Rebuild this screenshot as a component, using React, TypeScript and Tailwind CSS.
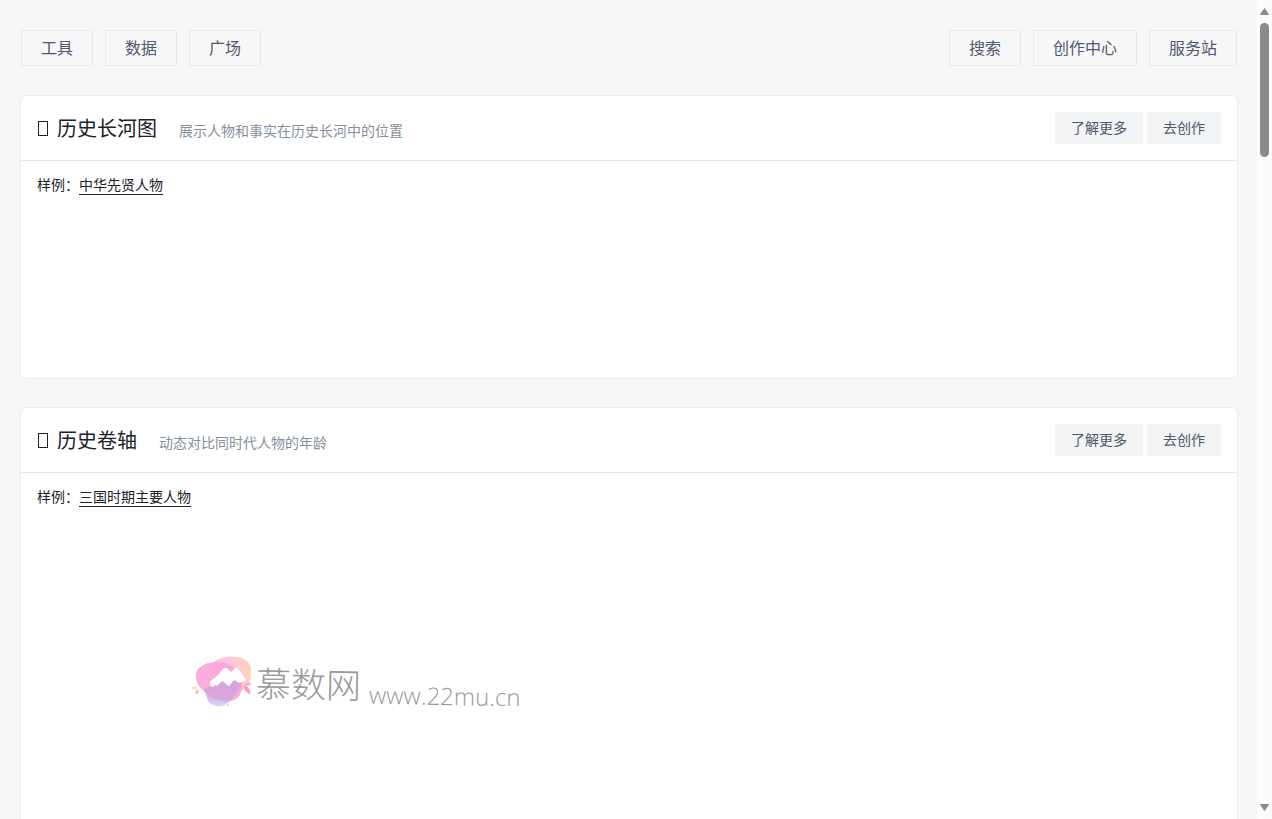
interface Tool {
  name: string;
  intro: string;
  example: string;
}

const leftLinks = ['工具', '数据', '广场'];
const rightLinks = ['搜索', '创作中心', '服务站'];

const riverTool: Tool = { name: '历史长河图', intro: '展示人物和事实在历史长河中的位置', example: '中华先贤人物' };
const scrollTool: Tool = { name: '历史卷轴', intro: '动态对比同时代人物的年龄', example: '三国时期主要人物' };

function NavLinks({ items }: { items: string[] }) {
  return (
    <div className="flex gap-3">
      {items.map((item) => (
        <a
          key={item}
          href="#"
          className="flex h-9 items-center border border-[#e9e9eb] px-[19px] pb-[3px] text-base leading-6 text-[#4e5969]"
        >
          {item}
        </a>
      ))}
    </div>
  );
}

function ToolHeader({ tool }: { tool: Tool }) {
  return (
    <header className="flex items-center justify-between border-b border-[#e5e6e8] px-4 py-4">
      <div className="flex items-baseline">
        <svg viewBox="0 0 12 16" className="mr-2 h-4 w-3 self-center" aria-hidden="true">
          <rect x="1.5" y="1.5" width="9" height="14" fill="none" stroke="#1d2129" />
        </svg>
        <h2 className="text-xl leading-8 text-[#1d2129]">{tool.name}</h2>
        <p className="ml-[22px] text-sm text-[#86909c]">{tool.intro}</p>
      </div>
      <div className="flex gap-1">
        <button type="button" className="h-8 bg-[#f2f3f5] px-4 pb-[2px] text-sm text-[#4e5969]">
          了解更多
        </button>
        <button type="button" className="h-8 bg-[#f2f3f5] px-4 pb-[2px] text-sm text-[#4e5969]">
          去创作
        </button>
      </div>
    </header>
  );
}

function Example({ name }: { name: string }) {
  return (
    <p className="px-4 py-[11px] text-sm leading-6 text-[#1d2129]">
      样例：
      <a href="#" className="inline-block border-b border-[#1d2129] leading-5">
        {name}
      </a>
    </p>
  );
}

function Watermark() {
  return (
    <div className="pointer-events-none absolute top-[247px] left-[170px] flex items-center text-[#999999]">
      <svg viewBox="0 0 62 54" className="h-[54px] w-[62px]" aria-hidden="true">
        <defs>
          <linearGradient id="blobPink" x1="0" y1="0" x2="1" y2="1">
            <stop offset="0" stopColor="#ff9fdc" />
            <stop offset="1" stopColor="#f9a9cd" />
          </linearGradient>
          <linearGradient id="blobPeach" x1="0" y1="0" x2="1" y2="0">
            <stop offset="0.4" stopColor="#fbb9d4" />
            <stop offset="1" stopColor="#ffc6a8" />
          </linearGradient>
          <linearGradient id="blobViolet" x1="0" y1="0" x2="0" y2="1">
            <stop offset="0" stopColor="#cf9fdc" />
            <stop offset="0.7" stopColor="#cda6e0" />
            <stop offset="1" stopColor="#c3d3ff" />
          </linearGradient>
        </defs>
        <path d="M22 8C27 2 37 1 46 2C54 3 60 8 60 14C59 19 61 24 57 30C52 37 47 36 40 34Z" fill="url(#blobPeach)" opacity="0.8" />
        <path d="M5 21C5 11 16 7 27 7C37 7 43 11 48 18C53 25 52 33 49 40C43 49 29 48 21 42C12 36 5 31 5 21Z" fill="url(#blobPink)" opacity="0.9" />
        <path d="M13 34C20 30 35 22 50 27C49 34 44 42 39 46C33 53 22 53 17 46Z" fill="url(#blobViolet)" opacity="0.8" />
        <path d="M19 27Q20 25 25 22L32 14Q35 11 38 15L40 17L43 14Q45 11 48 15L54 23Q56 26 53 26Q49 29 46 27Q44 24 42 26L39 30Q38 32 36 30L33 27Q31 25 29 28Q26 32 24 30Q21 34 19 30Z" fill="#fff" />
        <path d="M53 30C57 31 60 35 59 39C55 38 52 34 53 30Z" fill="#f59ccc" />
        <ellipse cx="57" cy="29" rx="3" ry="1.5" fill="#dfb5e6" />
        <ellipse cx="3" cy="33" rx="2.5" ry="1.5" fill="#ffd9cc" />
        <ellipse cx="6" cy="37" rx="1.5" ry="2.5" transform="rotate(25 6 37)" fill="#f9c0b4" />
        <circle cx="37" cy="50" r="1" fill="#d6c8fa" />
      </svg>
      <div className="ml-[3px] flex rotate-1 items-end pt-1">
        <span className="text-[35px] leading-[50px] font-light">慕数网</span>
        <span className="ml-2 font-['Open_Sans'] text-2xl leading-7 font-light">www.22mu.cn</span>
      </div>
    </div>
  );
}

function ScrollBar() {
  return (
    <div className="flex w-[15px] shrink-0 flex-col items-center bg-[#fcfcfc] pt-2 pb-2" aria-hidden="true">
      <svg viewBox="0 0 9 7" className="h-[7px] w-[9px]">
        <path d="M4.5 0.5L8.5 6.5H0.5Z" fill="#8b8b8b" stroke="#8b8b8b" strokeLinejoin="round" />
      </svg>
      <div className="mt-2 h-[134px] w-[9px] rounded-full bg-[#8b8b8b]" />
      <svg viewBox="0 0 9 7" className="mt-auto h-[7px] w-[9px]">
        <path d="M4.5 6.5L8.5 0.5H0.5Z" fill="#8b8b8b" stroke="#8b8b8b" strokeLinejoin="round" />
      </svg>
    </div>
  );
}

export default function App() {
  return (
    <div className="flex h-screen overflow-hidden bg-[#f7f7f7] font-['Noto_Sans_CJK_SC',sans-serif]">
      <main className="min-w-0 flex-1 overflow-hidden pt-[30px] pr-[19px] pl-5">
        <nav className="mb-[29px] flex justify-between px-px">
          <NavLinks items={leftLinks} />
          <NavLinks items={rightLinks} />
        </nav>

        <section className="mb-7 min-h-[284px] rounded-md border border-[#ececee] bg-white">
          <ToolHeader tool={riverTool} />
          <Example name={riverTool.example} />
        </section>

        <section className="relative min-h-[500px] rounded-md border border-[#ececee] bg-white">
          <ToolHeader tool={scrollTool} />
          <Example name={scrollTool.example} />
          <Watermark />
        </section>
      </main>
      <ScrollBar />
    </div>
  );
}
